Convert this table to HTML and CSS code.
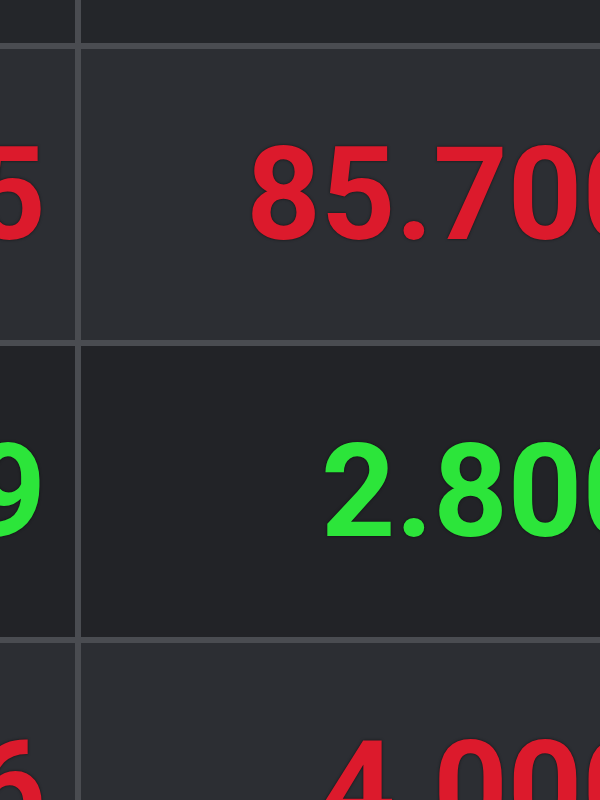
FILE: index.html
```html
<!DOCTYPE html>
<html lang="en">
<head>
  <meta charset="UTF-8">
  <title>Quotes</title>
  <link rel="stylesheet" href="styles.css">
</head>
<body>

  <div class="quotes">
    <div class="row row-head">
      <div class="cell cell-side"></div>
      <div class="cell cell-main"></div>
    </div>

    <div class="row row-light">
      <div class="cell cell-side down">5</div>
      <div class="cell cell-main down">85.700</div>
    </div>

    <div class="row row-dark">
      <div class="cell cell-side up">9</div>
      <div class="cell cell-main up">2.800</div>
    </div>

    <div class="row row-light">
      <div class="cell cell-side down">6</div>
      <div class="cell cell-main down">4.000</div>
    </div>
  </div>

</body>
</html>
```

FILE: styles.css
```css
* {
  margin: 0;
  padding: 0;
  box-sizing: border-box;
}

body {
  font-family: Roboto, 'Liberation Sans', sans-serif;
  background: #2b2d32;
  width: 600px;
  height: 800px;
  overflow: hidden;
}

.quotes {
  width: 700px;
}

.row {
  display: grid;
  grid-template-columns: 81px 619px;
  height: 297px;
  border-bottom: 6px solid #4a4c51;
}

.row-head {
  height: 49px;
  background: #24262a;
}

.row-light {
  background: #2c2e33;
}

.row-dark {
  background: #222327;
}

.cell {
  display: flex;
  align-items: center;
  justify-content: flex-end;
  padding-right: 43px;
  font-size: 130px;
  font-weight: 700;
  line-height: 1;
  white-space: nowrap;
  text-shadow: 0 0 3px rgba(0, 0, 0, 0.6);
}

.cell-side {
  border-right: 6px solid #4a4c51;
  padding-right: 29px;
  overflow: hidden;
}

.down {
  color: #dc1a2c;
}

.up {
  color: #2ce53a;
}
```
